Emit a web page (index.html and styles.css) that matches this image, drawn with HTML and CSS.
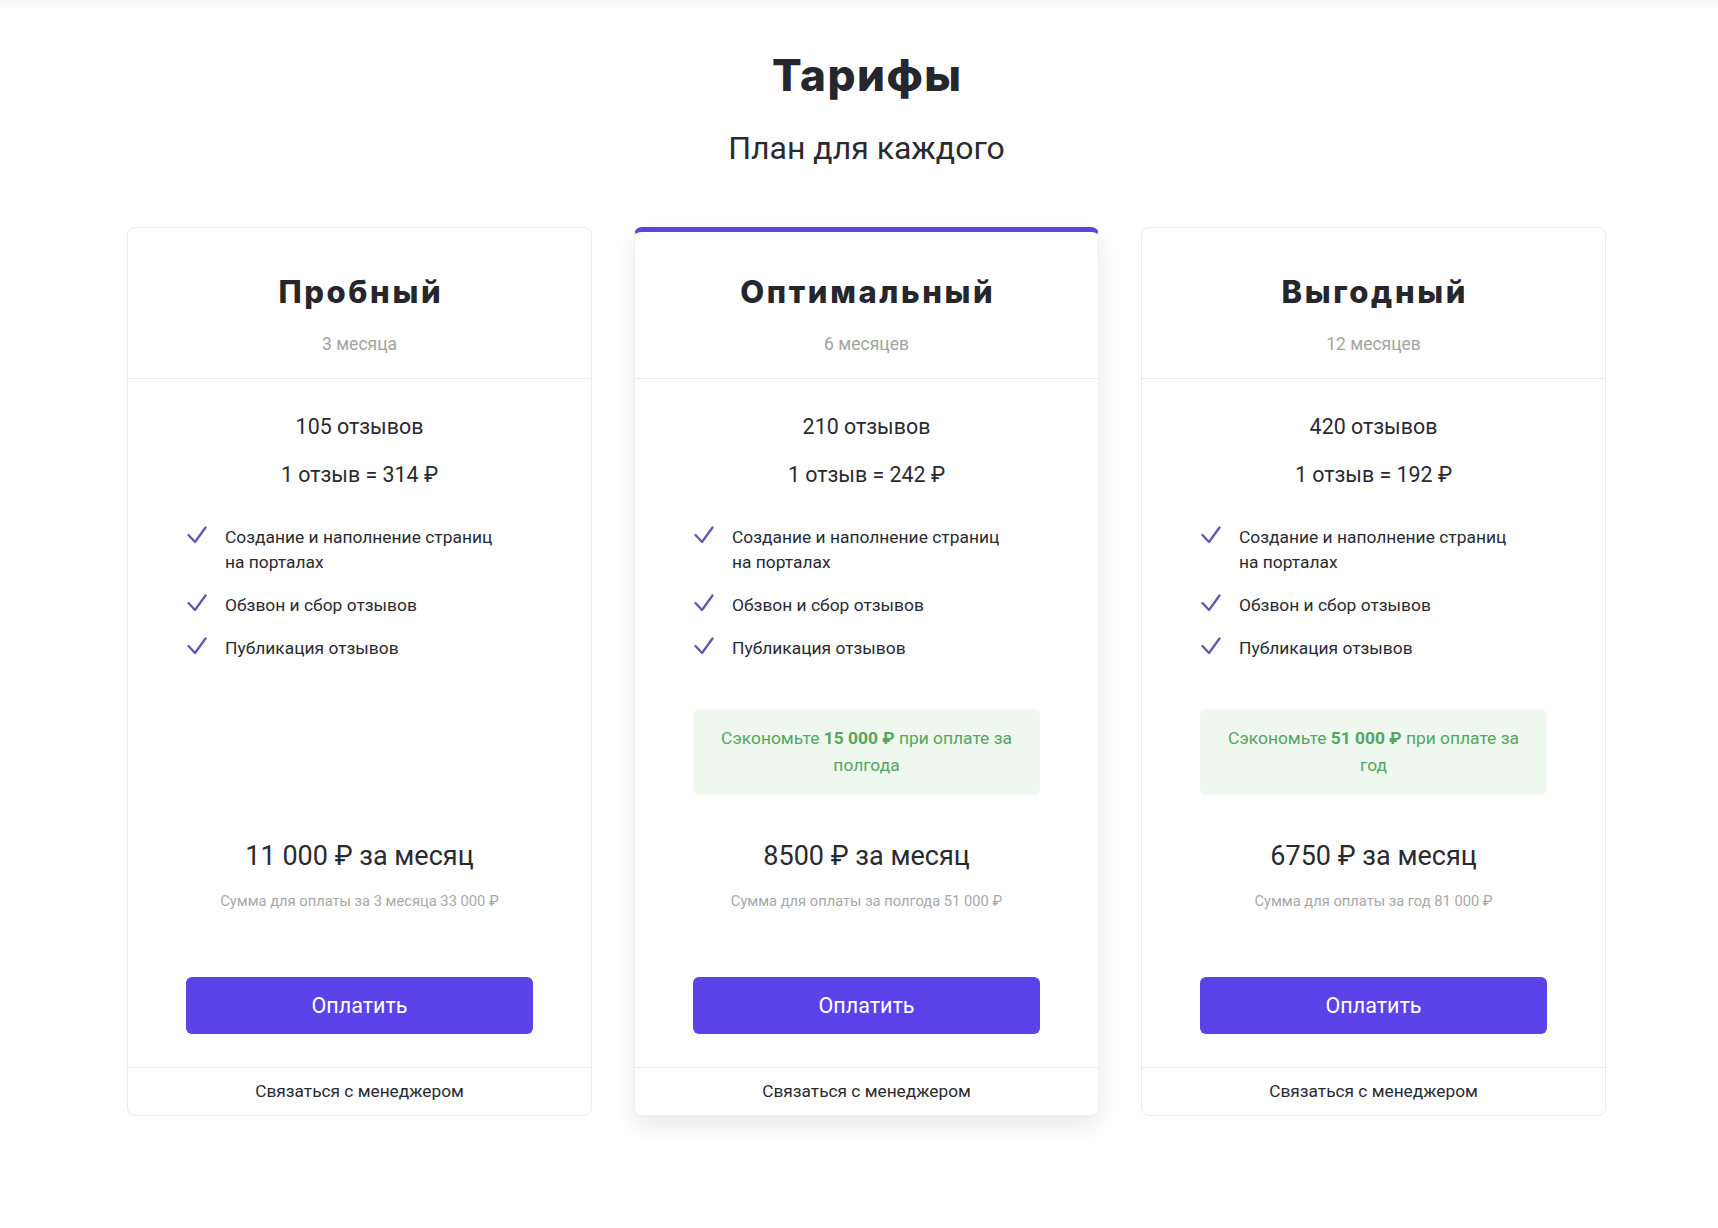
FILE: index.html
```html
<!DOCTYPE html>
<html lang="ru">
<head>
    <meta charset="UTF-8">
    <title>Тарифы</title>
    <link rel="stylesheet" href="styles.css">
</head>
<body>
    <div class="topbar"></div>
    <div class="page">
        <div class="heading">
            <h1 class="heading_title">Тарифы</h1>
            <p class="heading_sub">План для каждого</p>
        </div>

        <div class="plans">
            <div class="plan">
                <div class="plan_head">
                    <h2 class="plan_name">Пробный</h2>
                    <div class="plan_term">3 месяца</div>
                </div>
                <div class="plan_body">
                    <div class="plan_stat">105 отзывов</div>
                    <div class="plan_stat plan_stat-second">1 отзыв = 314 ₽</div>
                    <ul class="features">
                        <li class="feature">
                            <svg class="check" viewBox="0 0 20 18"><polyline points="1.5,9 8,16 18.5,1.5"/></svg>
                            <span>Создание и наполнение страниц на&nbsp;порталах</span>
                        </li>
                        <li class="feature">
                            <svg class="check" viewBox="0 0 20 18"><polyline points="1.5,9 8,16 18.5,1.5"/></svg>
                            <span>Обзвон и сбор отзывов</span>
                        </li>
                        <li class="feature">
                            <svg class="check" viewBox="0 0 20 18"><polyline points="1.5,9 8,16 18.5,1.5"/></svg>
                            <span>Публикация отзывов</span>
                        </li>
                    </ul>
                    <div class="plan_bottom">
                        <div class="plan_price">11 000 ₽ за месяц</div>
                        <div class="plan_total">Сумма для оплаты за 3 месяца 33 000 ₽</div>
                        <button class="btn_pay">Оплатить</button>
                    </div>
                </div>
                <div class="plan_foot">Связаться с менеджером</div>
            </div>

            <div class="plan plan-active">
                <div class="plan_head">
                    <h2 class="plan_name">Оптимальный</h2>
                    <div class="plan_term">6 месяцев</div>
                </div>
                <div class="plan_body">
                    <div class="plan_stat">210 отзывов</div>
                    <div class="plan_stat plan_stat-second">1 отзыв = 242 ₽</div>
                    <ul class="features">
                        <li class="feature">
                            <svg class="check" viewBox="0 0 20 18"><polyline points="1.5,9 8,16 18.5,1.5"/></svg>
                            <span>Создание и наполнение страниц на&nbsp;порталах</span>
                        </li>
                        <li class="feature">
                            <svg class="check" viewBox="0 0 20 18"><polyline points="1.5,9 8,16 18.5,1.5"/></svg>
                            <span>Обзвон и сбор отзывов</span>
                        </li>
                        <li class="feature">
                            <svg class="check" viewBox="0 0 20 18"><polyline points="1.5,9 8,16 18.5,1.5"/></svg>
                            <span>Публикация отзывов</span>
                        </li>
                    </ul>
                    <div class="saving">Сэкономьте <b>15&nbsp;000&nbsp;₽</b> при оплате за полгода</div>
                    <div class="plan_bottom">
                        <div class="plan_price">8500 ₽ за месяц</div>
                        <div class="plan_total">Сумма для оплаты за полгода 51 000 ₽</div>
                        <button class="btn_pay">Оплатить</button>
                    </div>
                </div>
                <div class="plan_foot">Связаться с менеджером</div>
            </div>

            <div class="plan">
                <div class="plan_head">
                    <h2 class="plan_name">Выгодный</h2>
                    <div class="plan_term">12 месяцев</div>
                </div>
                <div class="plan_body">
                    <div class="plan_stat">420 отзывов</div>
                    <div class="plan_stat plan_stat-second">1 отзыв = 192 ₽</div>
                    <ul class="features">
                        <li class="feature">
                            <svg class="check" viewBox="0 0 20 18"><polyline points="1.5,9 8,16 18.5,1.5"/></svg>
                            <span>Создание и наполнение страниц на&nbsp;порталах</span>
                        </li>
                        <li class="feature">
                            <svg class="check" viewBox="0 0 20 18"><polyline points="1.5,9 8,16 18.5,1.5"/></svg>
                            <span>Обзвон и сбор отзывов</span>
                        </li>
                        <li class="feature">
                            <svg class="check" viewBox="0 0 20 18"><polyline points="1.5,9 8,16 18.5,1.5"/></svg>
                            <span>Публикация отзывов</span>
                        </li>
                    </ul>
                    <div class="saving">Сэкономьте <b>51&nbsp;000&nbsp;₽</b> при оплате за год</div>
                    <div class="plan_bottom">
                        <div class="plan_price">6750 ₽ за месяц</div>
                        <div class="plan_total">Сумма для оплаты за год 81 000 ₽</div>
                        <button class="btn_pay">Оплатить</button>
                    </div>
                </div>
                <div class="plan_foot">Связаться с менеджером</div>
            </div>
        </div>
    </div>
</body>
</html>
```

FILE: styles.css
```css
body {
    margin: 0;
    background: #fff;
    color: #2a2a32;
    font-family: Roboto, "Noto Sans", sans-serif;
}
.topbar {
    height: 10px;
    background: linear-gradient(#f6f6f6, #fff);
}
.page {
    padding: 0 0 100px 15px;
}
.heading {
    text-align: center;
}
.heading_title {
    margin: 39px 0 0;
    padding-left: 1.5px;
    font-family: Inter, sans-serif;
    font-size: 44px;
    line-height: 52px;
    font-weight: 800;
    letter-spacing: 1.5px;
    color: #26262d;
}
.heading_sub {
    margin: 29px 0 0;
    font-size: 32px;
    line-height: 36px;
    color: #2a2a32;
}
.plans {
    width: 1479px;
    margin: 61px auto 0;
    display: grid;
    grid-template-columns: 1fr 1fr 1fr;
    gap: 42px;
}
.plan {
    display: flex;
    flex-direction: column;
    border: 1px solid #ebebeb;
    border-radius: 8px;
    background: #fff;
}
.plan-active {
    border-top: 5px solid #5b45dc;
    border-color: #f0f0f0;
    border-top-color: #5b45dc;
    box-shadow: 0 10px 24px rgba(0, 0, 0, 0.09);
}
.plan_head {
    padding: 46px 0 24px;
    text-align: center;
    border-bottom: 1px solid #ebebeb;
}
.plan-active .plan_head {
    padding-top: 42px;
}
.plan_name {
    margin: 0;
    padding-left: 2.6px;
    font-family: Inter, sans-serif;
    font-size: 31px;
    line-height: 36px;
    font-weight: 800;
    letter-spacing: 2.6px;
    color: #26262d;
}
.plan_term {
    margin-top: 24px;
    font-size: 17.5px;
    line-height: 20px;
    color: #a3a3a3;
}
.plan_body {
    flex: 1;
    display: flex;
    flex-direction: column;
    padding: 34px 58px 33px;
}
.plan_stat {
    text-align: center;
    font-size: 21.4px;
    line-height: 28px;
}
.plan_stat-second {
    margin-top: 20px;
}
.features {
    list-style: none;
    margin: 36px 0 0;
    padding: 0;
}
.feature {
    display: flex;
    align-items: flex-start;
    gap: 18px;
    margin-top: 18px;
    font-size: 17.4px;
    line-height: 25px;
}
.feature:first-child {
    margin-top: 0;
}
.feature span {
    max-width: 285px;
}
.check {
    flex: none;
    width: 20px;
    height: 18px;
    margin: 1px 0 0 1px;
    fill: none;
    stroke: #6656b0;
    stroke-width: 2.3;
    stroke-linecap: round;
    stroke-linejoin: round;
}
.saving {
    margin-top: 48px;
    padding: 16px 24px;
    border-radius: 6px;
    background: #eef8ef;
    color: #55a660;
    font-size: 17.4px;
    line-height: 27px;
    text-align: center;
}
.saving b {
    font-weight: 700;
}
.plan_bottom {
    margin-top: auto;
    padding-top: 45px;
    text-align: center;
}
.plan_price {
    font-size: 27px;
    line-height: 32px;
}
.plan_total {
    margin-top: 20px;
    font-size: 14.7px;
    line-height: 18px;
    color: #a8a8a8;
}
.btn_pay {
    display: block;
    width: 100%;
    height: 57px;
    margin-top: 67px;
    border: 0;
    border-radius: 6px;
    background: #5b42e9;
    color: #fff;
    font-family: Roboto, sans-serif;
    font-size: 21.5px;
    cursor: pointer;
}
.plan_foot {
    border-top: 1px solid #ebebeb;
    text-align: center;
    font-size: 17.3px;
    line-height: 47px;
    color: #2a2a32;
}
```
